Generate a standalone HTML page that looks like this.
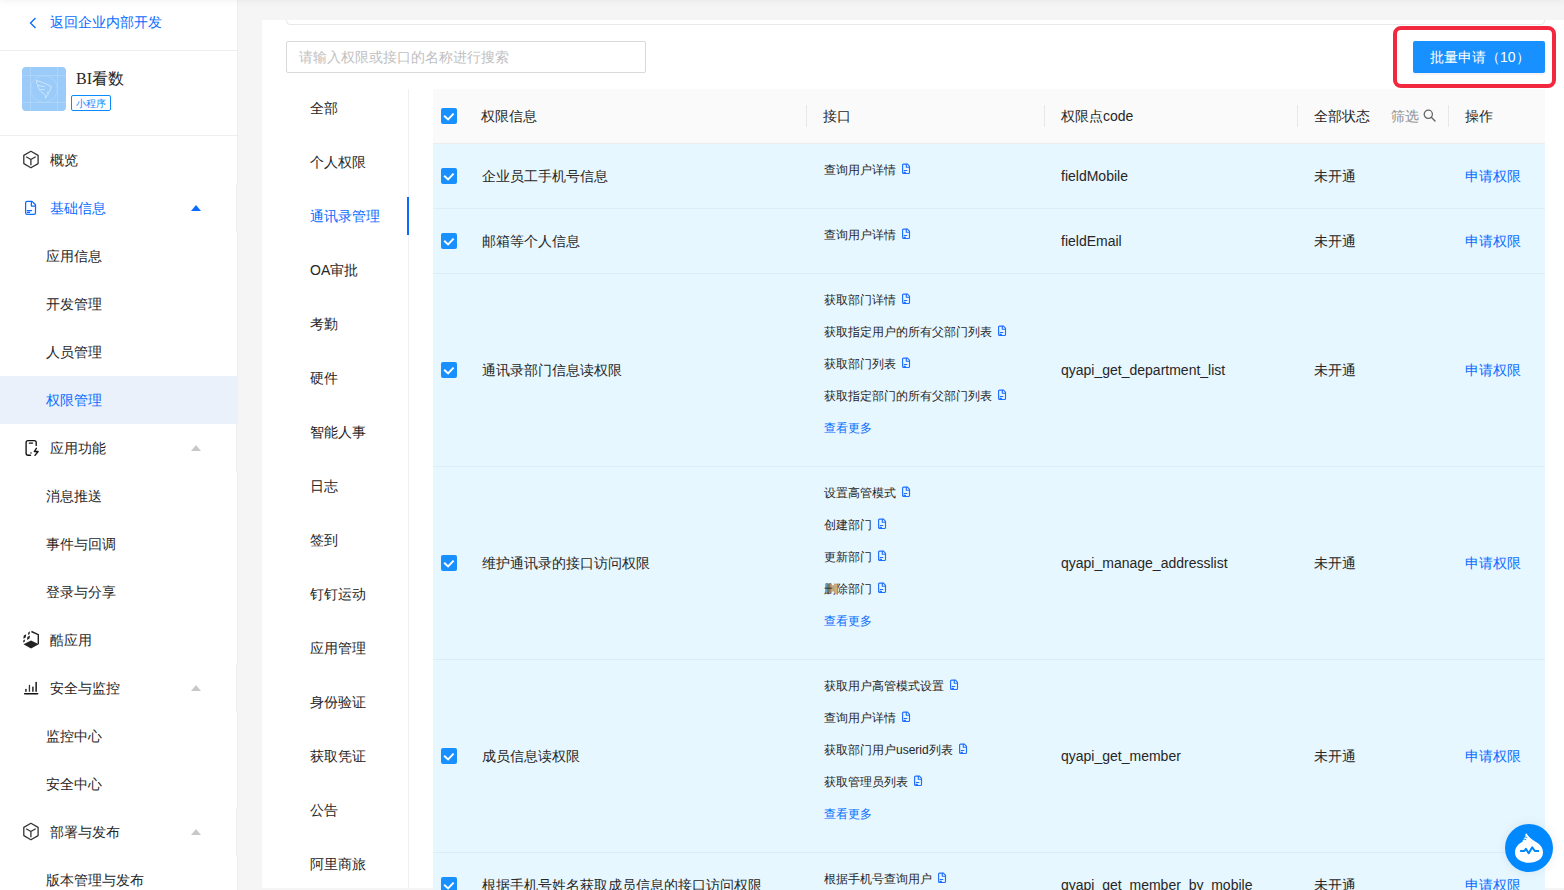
<!DOCTYPE html>
<html><head><meta charset="utf-8">
<style>
*{box-sizing:border-box;margin:0;padding:0}
html,body{width:1564px;height:890px;overflow:hidden}
body{position:relative;background:#f5f5f5;font-family:"Liberation Sans",sans-serif;font-size:14px;color:#262626}
.abs{position:absolute}
#topshadow{position:absolute;left:0;top:-20px;width:1564px;height:20px;box-shadow:0 0 7px rgba(40,60,50,.09);background:#fff;z-index:5}
#side{position:absolute;left:0;top:0;width:238px;height:890px;background:#fff;border-right:1px solid #eeeeee}
#back{position:absolute;left:0;top:0;width:237px;height:51px;border-bottom:1px solid #eeeeee;color:#0a6cff}
#back .txt{position:absolute;left:50px;top:11px;line-height:22px;font-size:14px}
#app{position:absolute;left:0;top:51px;width:237px;height:85px;border-bottom:1px solid #eeeeee}
.menu{position:absolute;left:0;top:136px;width:237px}
.mi{position:relative;height:48px;line-height:48px;font-size:14px;color:#262626}
.mi .t{position:absolute;left:50px;top:0}
.mi.sub .t{left:46px}
.mi.act{background:#eaf1fa}
.mi.blue{color:#0a6cff}
.mi svg.ic{position:absolute}
.mi.st::after{content:"";position:absolute;left:236px;top:0;width:2px;height:48px;background:linear-gradient(90deg,#eeeeee 50%,#f5f5f5 50%)}
.tri{position:absolute;left:191px;top:21px;width:0;height:0;border-left:5px solid transparent;border-right:5px solid transparent;border-bottom:6px solid #c8c8c8}
.tri.b{border-bottom-color:#0a6cff}
#card{position:absolute;left:262px;top:20px;width:1320px;height:868px;background:#fff;overflow:hidden}

.tab{position:absolute;left:310px;font-size:14px;line-height:22px;color:#262626;white-space:nowrap}
.tab.on{color:#0a6cff}
.cb{position:absolute;left:441px;width:16px;height:16px;border-radius:2px;background:#1890ff}
.cb svg{position:absolute;left:0;top:0}
.row{position:absolute;left:433px;width:1112px;background:#e6f7ff;border-bottom:1px solid #dbedf6}
.ct{position:absolute;font-size:14px;line-height:22px;white-space:nowrap;color:#262626}
.if{position:absolute;left:824px;font-size:12px;line-height:20px;color:#262626;white-space:nowrap}
.if svg{display:inline-block;vertical-align:top;margin-left:6px;margin-top:3px}
.more{color:#0a6cff}
.sep{position:absolute;top:105px;width:1px;height:22px;background:#e8e8e8}
</style></head><body>
<div id="topshadow"></div>
<div id="side">
  <div id="back">
    <svg class="abs" style="left:29px;top:17px" width="8" height="12" viewBox="0 0 8 12"><path d="M6.5 1 L1.5 6 L6.5 11" fill="none" stroke="#0a6cff" stroke-width="1.4"/></svg>
    <span class="txt">返回企业内部开发</span>
  </div>
  <div id="app">
    <svg class="abs" style="left:22px;top:16px" width="44" height="44" viewBox="0 0 44 44">
      <rect x="0" y="0" width="44" height="44" rx="4" fill="#9bcbf8"/>
      <g stroke="#b3d8fb" stroke-width="0.7" fill="none">
        <line x1="8.5" y1="0" x2="8.5" y2="44"/><line x1="35.5" y1="0" x2="35.5" y2="44"/>
        <line x1="0" y1="8.5" x2="44" y2="8.5"/><line x1="0" y1="35.5" x2="44" y2="35.5"/>
        <circle cx="22" cy="22" r="13.5"/>
      </g>
      <path d="M14.3 13.3 C19 15 25 17 29.2 19.5 C29 21.5 28 23.6 26.4 26 L25 25.6 L26.6 27.2 L24.6 28.6 L23.6 31.3 L23.4 28.6 L21 26.2 C18.2 24.2 15.4 21.2 14.3 13.3 Z M16 18.3 L22.7 19.8 M18.2 22.6 L22.7 22.6" fill="none" stroke="#d3e9fd" stroke-width="0.9" stroke-linejoin="round"/>
    </svg>
    <div class="abs" style="left:76px;top:17px;font-size:16px;line-height:22px;color:#262626"><span style="font-family:'Liberation Serif',serif">BI</span>看数</div>
    <div class="abs" style="left:71px;top:44px;width:40px;height:16px;border:1px solid #0a8bff;border-radius:2px;color:#0a8bff;font-size:10px;line-height:15px;text-align:center">小程序</div>
  </div>
  <div class="menu">
    <div class="mi"><svg class="ic" style="left:0;top:0" width="48" height="48" viewBox="0 0 48 48"><g fill="none" stroke="#333" stroke-width="1.3" stroke-linejoin="round"><path d="M30.9 15.3 L38.1 19.4 L38.1 27.6 L30.9 31.8 L23.8 27.6 L23.8 19.4 Z"/><path d="M26.1 20.7 L30.9 23.5 L35.7 20.7 M30.9 23.5 L30.9 29.3"/></g></svg><span class="t">概览</span></div>
    <div class="mi blue st"><svg class="ic" style="left:0;top:0" width="48" height="48" viewBox="0 0 48 48"><g fill="none" stroke="#0a6cff" stroke-width="1.25" stroke-linejoin="round" stroke-linecap="round"><path d="M32 17.4 L27.2 17.4 Q25.6 17.4 25.6 19 L25.6 28.7 Q25.6 30.3 27.2 30.3 L33.9 30.3 Q35.5 30.3 35.5 28.7 L35.5 20.8 Z"/><path d="M31.4 17.6 L31.4 22.1 L35.3 22.1"/><path d="M27.2 26.5 L31.6 26.5 M27.4 28.4 L29.6 28.4"/></g></svg><span class="t">基础信息</span><i class="tri b"></i></div>
    <div class="mi sub"><span class="t">应用信息</span></div>
    <div class="mi sub"><span class="t">开发管理</span></div>
    <div class="mi sub"><span class="t">人员管理</span></div>
    <div class="mi sub act blue"><span class="t">权限管理</span></div>
    <div class="mi st"><svg class="ic" style="left:0;top:0" width="48" height="48" viewBox="0 0 48 48"><g fill="none" stroke="#111" stroke-width="1.35" stroke-linecap="round" stroke-linejoin="round"><path d="M36.2 21.4 L36.2 18.6 Q36.2 16.6 34.2 16.6 L28.1 16.6 Q26.1 16.6 26.1 18.6 L26.1 29.2 Q26.1 31.2 28.1 31.2 L30.5 31.2"/><path d="M29.3 19.1 L32.6 19.1"/><path d="M36.4 24.3 L34.3 27.5 L38.1 27.5 L35 31.4"/></g><rect x="30.3" y="28.2" width="1.5" height="1.5" fill="#555"/></svg><span class="t">应用功能</span><i class="tri"></i></div>
    <div class="mi sub"><span class="t">消息推送</span></div>
    <div class="mi sub"><span class="t">事件与回调</span></div>
    <div class="mi sub"><span class="t">登录与分享</span></div>
    <div class="mi"><svg class="ic" style="left:0;top:0" width="48" height="48" viewBox="0 0 48 48"><g fill="#222"><path d="M23.5 28.2 L31 24.4 L38.8 28.2 L31 32.5 Z"/></g><path d="M31.4 15.5 L38.3 18.7 L38.3 28" fill="none" stroke="#222" stroke-width="1.4"/><g fill="#222"><path d="M28.3 16.4 L30 15.3 L29.6 17.9 L27.9 19 Z"/><path d="M23.8 19.6 L26.2 18.2 L25.7 21.4 L23.3 22.8 Z"/><path d="M27.4 20.9 L30 19.5 L29.5 22.5 L27 23.9 Z"/><path d="M23.4 24.3 L25 23.4 L24.7 25.7 L23.1 26.6 Z"/></g></svg><span class="t">酷应用</span></div>
    <div class="mi st"><svg class="ic" style="left:0;top:0" width="48" height="48" viewBox="0 0 48 48"><g fill="#333"><rect x="25.1" y="24.9" width="1.6" height="2.9"/><rect x="28.8" y="20.9" width="1.3" height="6.9"/><rect x="32.1" y="22.6" width="1.6" height="5.2"/><rect x="35.3" y="17.9" width="1.7" height="9.9"/></g><path d="M24.6 29.7 L37.6 29.7" stroke="#111" stroke-width="1.5" stroke-linecap="round"/></svg><span class="t">安全与监控</span><i class="tri"></i></div>
    <div class="mi sub"><span class="t">监控中心</span></div>
    <div class="mi sub"><span class="t">安全中心</span></div>
    <div class="mi st"><svg class="ic" style="left:0;top:0" width="48" height="48" viewBox="0 0 48 48"><g fill="none" stroke="#333" stroke-width="1.3" stroke-linejoin="round"><path d="M30.9 15.3 L38.1 19.4 L38.1 27.6 L30.9 31.8 L23.8 27.6 L23.8 19.4 Z"/><path d="M26.1 20.7 L30.9 23.5 L35.7 20.7 M30.9 23.5 L30.9 29.3"/></g></svg><span class="t">部署与发布</span><i class="tri"></i></div>
    <div class="mi sub"><span class="t">版本管理与发布</span></div>
  </div>
</div>
<div id="card"></div>
<div class="abs" style="left:262px;top:20px;width:1302px;height:10px;overflow:hidden"><div class="abs" style="left:24px;top:-40px;width:1259px;height:45px;border:1px solid #e8e8e8;border-radius:4px;background:#fff"></div></div>
<div class="abs" style="left:286px;top:41px;width:360px;height:32px;border:1px solid #d9d9d9;border-radius:2px;background:#fff"><span class="abs" style="left:12px;top:4px;line-height:22px;color:#bfbfbf;font-size:14px;white-space:nowrap">请输入权限或接口的名称进行搜索</span></div>
<div class="abs" style="left:1413px;top:41px;width:132px;height:32px;background:#1890ff;border-radius:2px;box-shadow:0 2px 0 rgba(0,0,0,.045);color:#fff;font-size:14px;line-height:32px;white-space:nowrap"><span class="abs" style="left:17px;top:0">批量申请（10）</span></div>
<div class="abs" style="left:1393px;top:26px;width:163px;height:62px;border:4px solid #f2283e;border-radius:8px"></div>
<div class="tab" style="top:97px">全部</div>
<div class="tab" style="top:151px">个人权限</div>
<div class="tab on" style="top:205px">通讯录管理</div>
<div class="tab" style="top:259px">OA审批</div>
<div class="tab" style="top:313px">考勤</div>
<div class="tab" style="top:367px">硬件</div>
<div class="tab" style="top:421px">智能人事</div>
<div class="tab" style="top:475px">日志</div>
<div class="tab" style="top:529px">签到</div>
<div class="tab" style="top:583px">钉钉运动</div>
<div class="tab" style="top:637px">应用管理</div>
<div class="tab" style="top:691px">身份验证</div>
<div class="tab" style="top:745px">获取凭证</div>
<div class="tab" style="top:799px">公告</div>
<div class="tab" style="top:853px">阿里商旅</div>
<div class="abs" style="left:408px;top:89px;width:1px;height:799px;background:#f0f0f0"></div>
<div class="abs" style="left:407px;top:197px;width:2px;height:38px;background:#0a6cff"></div>
<div class="abs" style="left:433px;top:89px;width:1112px;height:55px;background:#fafafa;border-bottom:1px solid #ececec"></div>
<div class="cb" style="top:108px"><svg width="16" height="16" viewBox="0 0 16 16"><path d="M3.9 8.4 L7.1 11.4 L11.9 6.4" fill="none" stroke="#fff" stroke-width="2" stroke-linecap="square"/></svg></div>
<div class="ct" style="left:481px;top:105px">权限信息</div>
<div class="ct" style="left:823px;top:105px">接口</div>
<div class="ct" style="left:1061px;top:105px">权限点code</div>
<div class="ct" style="left:1314px;top:105px">全部状态</div>
<div class="ct" style="left:1465px;top:105px">操作</div>
<div class="ct" style="left:1391px;top:105px;color:#8f8f8f">筛选</div>
<svg class="abs" style="left:1423px;top:109px" width="13" height="13" viewBox="0 0 13 13"><circle cx="5.3" cy="5.3" r="4.1" fill="none" stroke="#666" stroke-width="1.3"/><path d="M8.3 8.3 L12 12" stroke="#666" stroke-width="1.4" stroke-linecap="round"/></svg>
<div class="sep" style="left:806px"></div>
<div class="sep" style="left:1044px"></div>
<div class="sep" style="left:1297px"></div>
<div class="sep" style="left:1448px"></div>
<div class="row" style="top:144px;height:65px"></div>
<div class="cb" style="top:168px"><svg width="16" height="16" viewBox="0 0 16 16"><path d="M3.9 8.4 L7.1 11.4 L11.9 6.4" fill="none" stroke="#fff" stroke-width="2" stroke-linecap="square"/></svg></div>
<div class="ct" style="left:482px;top:165px">企业员工手机号信息</div>
<div class="ct" style="left:1061px;top:165px">fieldMobile</div>
<div class="ct" style="left:1314px;top:165px">未开通</div>
<div class="ct" style="left:1465px;top:165px;color:#0a6cff">申请权限</div>
<div class="if" style="top:160px">查询用户详情<svg width="9" height="12" viewBox="0 0 9 12"><g fill="none" stroke="#1f6fff" stroke-width="1.15" stroke-linejoin="round" stroke-linecap="round"><path d="M5.5 1.1 L1.6 1.1 Q0.6 1.1 0.6 2.1 L0.6 9.5 Q0.6 10.5 1.6 10.5 L6.5 10.5 Q7.5 10.5 7.5 9.5 L7.5 3.3 Z"/><path d="M4.3 1.2 L4.3 4.2 L7.4 4.2"/><path d="M2.2 7.5 L4.8 7.5 M2 9.4 L3.4 9.4"/></g></svg></div>
<div class="row" style="top:209px;height:65px"></div>
<div class="cb" style="top:233px"><svg width="16" height="16" viewBox="0 0 16 16"><path d="M3.9 8.4 L7.1 11.4 L11.9 6.4" fill="none" stroke="#fff" stroke-width="2" stroke-linecap="square"/></svg></div>
<div class="ct" style="left:482px;top:230px">邮箱等个人信息</div>
<div class="ct" style="left:1061px;top:230px">fieldEmail</div>
<div class="ct" style="left:1314px;top:230px">未开通</div>
<div class="ct" style="left:1465px;top:230px;color:#0a6cff">申请权限</div>
<div class="if" style="top:225px">查询用户详情<svg width="9" height="12" viewBox="0 0 9 12"><g fill="none" stroke="#1f6fff" stroke-width="1.15" stroke-linejoin="round" stroke-linecap="round"><path d="M5.5 1.1 L1.6 1.1 Q0.6 1.1 0.6 2.1 L0.6 9.5 Q0.6 10.5 1.6 10.5 L6.5 10.5 Q7.5 10.5 7.5 9.5 L7.5 3.3 Z"/><path d="M4.3 1.2 L4.3 4.2 L7.4 4.2"/><path d="M2.2 7.5 L4.8 7.5 M2 9.4 L3.4 9.4"/></g></svg></div>
<div class="row" style="top:274px;height:193px"></div>
<div class="cb" style="top:362px"><svg width="16" height="16" viewBox="0 0 16 16"><path d="M3.9 8.4 L7.1 11.4 L11.9 6.4" fill="none" stroke="#fff" stroke-width="2" stroke-linecap="square"/></svg></div>
<div class="ct" style="left:482px;top:359px">通讯录部门信息读权限</div>
<div class="ct" style="left:1061px;top:359px">qyapi_get_department_list</div>
<div class="ct" style="left:1314px;top:359px">未开通</div>
<div class="ct" style="left:1465px;top:359px;color:#0a6cff">申请权限</div>
<div class="if" style="top:290px">获取部门详情<svg width="9" height="12" viewBox="0 0 9 12"><g fill="none" stroke="#1f6fff" stroke-width="1.15" stroke-linejoin="round" stroke-linecap="round"><path d="M5.5 1.1 L1.6 1.1 Q0.6 1.1 0.6 2.1 L0.6 9.5 Q0.6 10.5 1.6 10.5 L6.5 10.5 Q7.5 10.5 7.5 9.5 L7.5 3.3 Z"/><path d="M4.3 1.2 L4.3 4.2 L7.4 4.2"/><path d="M2.2 7.5 L4.8 7.5 M2 9.4 L3.4 9.4"/></g></svg></div>
<div class="if" style="top:322px">获取指定用户的所有父部门列表<svg width="9" height="12" viewBox="0 0 9 12"><g fill="none" stroke="#1f6fff" stroke-width="1.15" stroke-linejoin="round" stroke-linecap="round"><path d="M5.5 1.1 L1.6 1.1 Q0.6 1.1 0.6 2.1 L0.6 9.5 Q0.6 10.5 1.6 10.5 L6.5 10.5 Q7.5 10.5 7.5 9.5 L7.5 3.3 Z"/><path d="M4.3 1.2 L4.3 4.2 L7.4 4.2"/><path d="M2.2 7.5 L4.8 7.5 M2 9.4 L3.4 9.4"/></g></svg></div>
<div class="if" style="top:354px">获取部门列表<svg width="9" height="12" viewBox="0 0 9 12"><g fill="none" stroke="#1f6fff" stroke-width="1.15" stroke-linejoin="round" stroke-linecap="round"><path d="M5.5 1.1 L1.6 1.1 Q0.6 1.1 0.6 2.1 L0.6 9.5 Q0.6 10.5 1.6 10.5 L6.5 10.5 Q7.5 10.5 7.5 9.5 L7.5 3.3 Z"/><path d="M4.3 1.2 L4.3 4.2 L7.4 4.2"/><path d="M2.2 7.5 L4.8 7.5 M2 9.4 L3.4 9.4"/></g></svg></div>
<div class="if" style="top:386px">获取指定部门的所有父部门列表<svg width="9" height="12" viewBox="0 0 9 12"><g fill="none" stroke="#1f6fff" stroke-width="1.15" stroke-linejoin="round" stroke-linecap="round"><path d="M5.5 1.1 L1.6 1.1 Q0.6 1.1 0.6 2.1 L0.6 9.5 Q0.6 10.5 1.6 10.5 L6.5 10.5 Q7.5 10.5 7.5 9.5 L7.5 3.3 Z"/><path d="M4.3 1.2 L4.3 4.2 L7.4 4.2"/><path d="M2.2 7.5 L4.8 7.5 M2 9.4 L3.4 9.4"/></g></svg></div>
<div class="if more" style="top:418px">查看更多</div>
<div class="row" style="top:467px;height:193px"></div>
<div class="cb" style="top:555px"><svg width="16" height="16" viewBox="0 0 16 16"><path d="M3.9 8.4 L7.1 11.4 L11.9 6.4" fill="none" stroke="#fff" stroke-width="2" stroke-linecap="square"/></svg></div>
<div class="ct" style="left:482px;top:552px">维护通讯录的接口访问权限</div>
<div class="ct" style="left:1061px;top:552px">qyapi_manage_addresslist</div>
<div class="ct" style="left:1314px;top:552px">未开通</div>
<div class="ct" style="left:1465px;top:552px;color:#0a6cff">申请权限</div>
<div class="if" style="top:483px">设置高管模式<svg width="9" height="12" viewBox="0 0 9 12"><g fill="none" stroke="#1f6fff" stroke-width="1.15" stroke-linejoin="round" stroke-linecap="round"><path d="M5.5 1.1 L1.6 1.1 Q0.6 1.1 0.6 2.1 L0.6 9.5 Q0.6 10.5 1.6 10.5 L6.5 10.5 Q7.5 10.5 7.5 9.5 L7.5 3.3 Z"/><path d="M4.3 1.2 L4.3 4.2 L7.4 4.2"/><path d="M2.2 7.5 L4.8 7.5 M2 9.4 L3.4 9.4"/></g></svg></div>
<div class="if" style="top:515px">创建部门<svg width="9" height="12" viewBox="0 0 9 12"><g fill="none" stroke="#1f6fff" stroke-width="1.15" stroke-linejoin="round" stroke-linecap="round"><path d="M5.5 1.1 L1.6 1.1 Q0.6 1.1 0.6 2.1 L0.6 9.5 Q0.6 10.5 1.6 10.5 L6.5 10.5 Q7.5 10.5 7.5 9.5 L7.5 3.3 Z"/><path d="M4.3 1.2 L4.3 4.2 L7.4 4.2"/><path d="M2.2 7.5 L4.8 7.5 M2 9.4 L3.4 9.4"/></g></svg></div>
<div class="if" style="top:547px">更新部门<svg width="9" height="12" viewBox="0 0 9 12"><g fill="none" stroke="#1f6fff" stroke-width="1.15" stroke-linejoin="round" stroke-linecap="round"><path d="M5.5 1.1 L1.6 1.1 Q0.6 1.1 0.6 2.1 L0.6 9.5 Q0.6 10.5 1.6 10.5 L6.5 10.5 Q7.5 10.5 7.5 9.5 L7.5 3.3 Z"/><path d="M4.3 1.2 L4.3 4.2 L7.4 4.2"/><path d="M2.2 7.5 L4.8 7.5 M2 9.4 L3.4 9.4"/></g></svg></div>
<div class="if" style="top:579px">删除部门<svg width="9" height="12" viewBox="0 0 9 12"><g fill="none" stroke="#1f6fff" stroke-width="1.15" stroke-linejoin="round" stroke-linecap="round"><path d="M5.5 1.1 L1.6 1.1 Q0.6 1.1 0.6 2.1 L0.6 9.5 Q0.6 10.5 1.6 10.5 L6.5 10.5 Q7.5 10.5 7.5 9.5 L7.5 3.3 Z"/><path d="M4.3 1.2 L4.3 4.2 L7.4 4.2"/><path d="M2.2 7.5 L4.8 7.5 M2 9.4 L3.4 9.4"/></g></svg></div>
<div class="if more" style="top:611px">查看更多</div>
<div class="row" style="top:660px;height:193px"></div>
<div class="cb" style="top:748px"><svg width="16" height="16" viewBox="0 0 16 16"><path d="M3.9 8.4 L7.1 11.4 L11.9 6.4" fill="none" stroke="#fff" stroke-width="2" stroke-linecap="square"/></svg></div>
<div class="ct" style="left:482px;top:745px">成员信息读权限</div>
<div class="ct" style="left:1061px;top:745px">qyapi_get_member</div>
<div class="ct" style="left:1314px;top:745px">未开通</div>
<div class="ct" style="left:1465px;top:745px;color:#0a6cff">申请权限</div>
<div class="if" style="top:676px">获取用户高管模式设置<svg width="9" height="12" viewBox="0 0 9 12"><g fill="none" stroke="#1f6fff" stroke-width="1.15" stroke-linejoin="round" stroke-linecap="round"><path d="M5.5 1.1 L1.6 1.1 Q0.6 1.1 0.6 2.1 L0.6 9.5 Q0.6 10.5 1.6 10.5 L6.5 10.5 Q7.5 10.5 7.5 9.5 L7.5 3.3 Z"/><path d="M4.3 1.2 L4.3 4.2 L7.4 4.2"/><path d="M2.2 7.5 L4.8 7.5 M2 9.4 L3.4 9.4"/></g></svg></div>
<div class="if" style="top:708px">查询用户详情<svg width="9" height="12" viewBox="0 0 9 12"><g fill="none" stroke="#1f6fff" stroke-width="1.15" stroke-linejoin="round" stroke-linecap="round"><path d="M5.5 1.1 L1.6 1.1 Q0.6 1.1 0.6 2.1 L0.6 9.5 Q0.6 10.5 1.6 10.5 L6.5 10.5 Q7.5 10.5 7.5 9.5 L7.5 3.3 Z"/><path d="M4.3 1.2 L4.3 4.2 L7.4 4.2"/><path d="M2.2 7.5 L4.8 7.5 M2 9.4 L3.4 9.4"/></g></svg></div>
<div class="if" style="top:740px">获取部门用户userid列表<svg width="9" height="12" viewBox="0 0 9 12"><g fill="none" stroke="#1f6fff" stroke-width="1.15" stroke-linejoin="round" stroke-linecap="round"><path d="M5.5 1.1 L1.6 1.1 Q0.6 1.1 0.6 2.1 L0.6 9.5 Q0.6 10.5 1.6 10.5 L6.5 10.5 Q7.5 10.5 7.5 9.5 L7.5 3.3 Z"/><path d="M4.3 1.2 L4.3 4.2 L7.4 4.2"/><path d="M2.2 7.5 L4.8 7.5 M2 9.4 L3.4 9.4"/></g></svg></div>
<div class="if" style="top:772px">获取管理员列表<svg width="9" height="12" viewBox="0 0 9 12"><g fill="none" stroke="#1f6fff" stroke-width="1.15" stroke-linejoin="round" stroke-linecap="round"><path d="M5.5 1.1 L1.6 1.1 Q0.6 1.1 0.6 2.1 L0.6 9.5 Q0.6 10.5 1.6 10.5 L6.5 10.5 Q7.5 10.5 7.5 9.5 L7.5 3.3 Z"/><path d="M4.3 1.2 L4.3 4.2 L7.4 4.2"/><path d="M2.2 7.5 L4.8 7.5 M2 9.4 L3.4 9.4"/></g></svg></div>
<div class="if more" style="top:804px">查看更多</div>
<div class="row" style="top:853px;height:65px"></div>
<div class="cb" style="top:877px"><svg width="16" height="16" viewBox="0 0 16 16"><path d="M3.9 8.4 L7.1 11.4 L11.9 6.4" fill="none" stroke="#fff" stroke-width="2" stroke-linecap="square"/></svg></div>
<div class="ct" style="left:482px;top:874px">根据手机号姓名获取成员信息的接口访问权限</div>
<div class="ct" style="left:1061px;top:874px">qyapi_get_member_by_mobile</div>
<div class="ct" style="left:1314px;top:874px">未开通</div>
<div class="ct" style="left:1465px;top:874px;color:#0a6cff">申请权限</div>
<div class="if" style="top:869px">根据手机号查询用户<svg width="9" height="12" viewBox="0 0 9 12"><g fill="none" stroke="#1f6fff" stroke-width="1.15" stroke-linejoin="round" stroke-linecap="round"><path d="M5.5 1.1 L1.6 1.1 Q0.6 1.1 0.6 2.1 L0.6 9.5 Q0.6 10.5 1.6 10.5 L6.5 10.5 Q7.5 10.5 7.5 9.5 L7.5 3.3 Z"/><path d="M4.3 1.2 L4.3 4.2 L7.4 4.2"/><path d="M2.2 7.5 L4.8 7.5 M2 9.4 L3.4 9.4"/></g></svg></div>
<div class="abs" style="left:1505px;top:824px;width:48px;height:48px;border-radius:50%;background:#0089ff;box-shadow:0 0 12px rgba(0,0,0,.08)"><svg width="48" height="48" viewBox="0 0 48 48"><path d="M21.4 9.2 C23.5 12.5 26.5 15.5 31 18 C35.5 20.5 38 24 38 28.5 C38 34.5 32 38.8 24 38.8 C16 38.8 10 34.5 10 28.5 C10 23.5 13.5 19.8 17.8 17.6 L17.6 16.4 L18.9 15.8 L18.3 14.5 L19.8 13.7 L19.5 12.3 L20.6 11.5 L20.3 10.2 Z" fill="#fff"/><path d="M18.9 12.3 L22.2 13.6 M18.1 14.6 L21.2 15.8" stroke="#0089ff" stroke-width="0.9" fill="none"/><path d="M15.1 27 L19.4 27 L20.9 24.9 L23.7 29.3 L27.2 23.3 L29.9 27 L34 27" fill="none" stroke="#0089ff" stroke-width="2" stroke-linejoin="round"/></svg></div>
</body></html>
